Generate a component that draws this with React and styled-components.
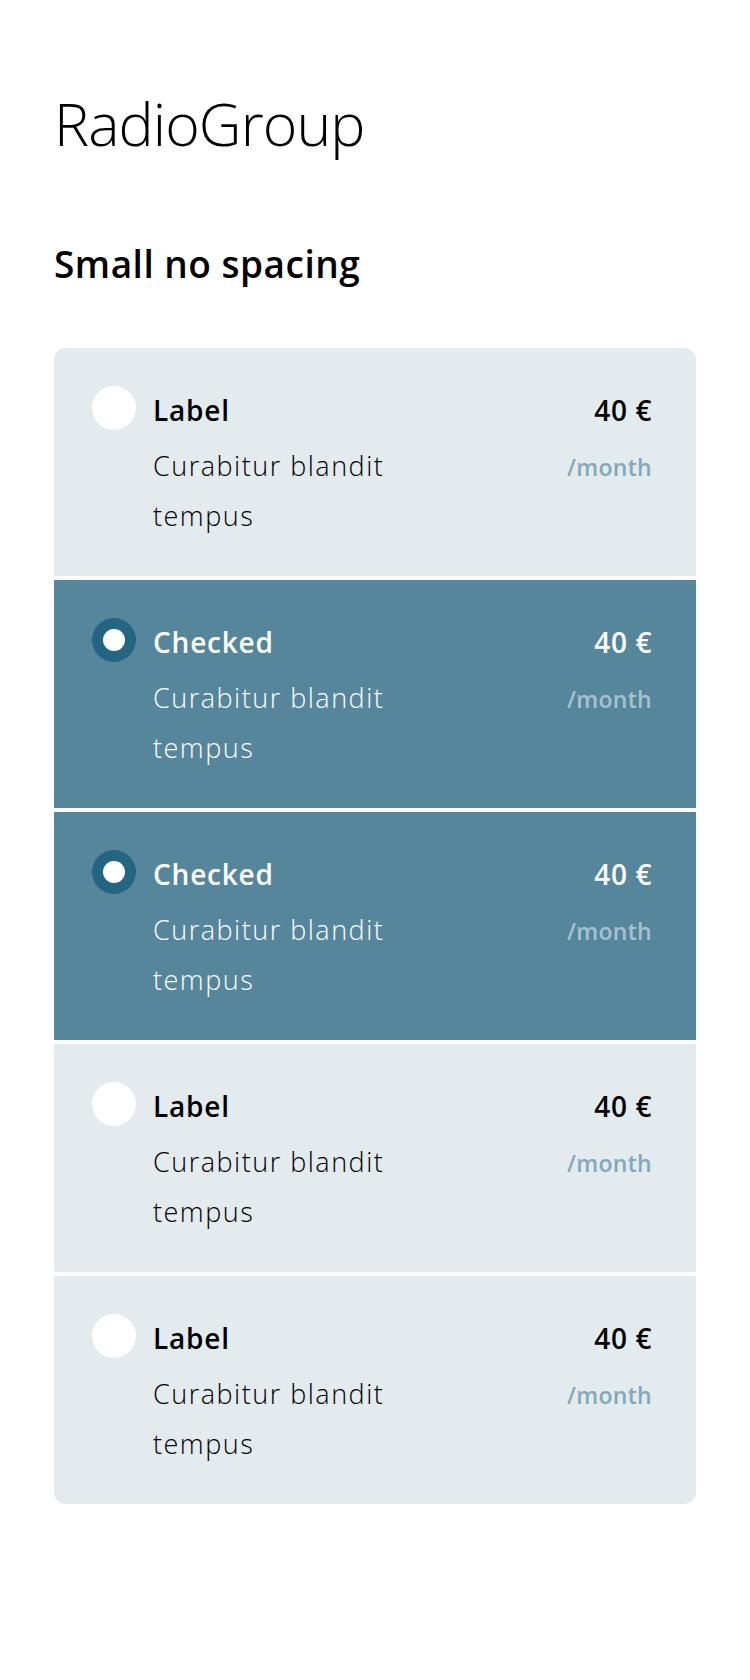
import React from "react";
import styled, { createGlobalStyle } from "styled-components";

const GlobalStyle = createGlobalStyle`
  body {
    margin: 0;
    background: #ffffff;
    font-family: "Open Sans", "Noto Sans", sans-serif;
    color: #000000;
  }
`;

const options = [
  { label: "Label", checked: false },
  { label: "Checked", checked: true },
  { label: "Checked", checked: true },
  { label: "Label", checked: false },
  { label: "Label", checked: false },
];

const Page = styled.main`
  padding: 83px 54px 100px;
`;

const Title = styled.h1`
  margin: 0;
  font-size: 59px;
  font-weight: 300;
  letter-spacing: -0.9px;
  line-height: 80px;
`;

const Subtitle = styled.h2`
  margin: 76px 0 0;
  font-size: 37px;
  font-weight: 600;
  letter-spacing: 0.5px;
  line-height: 50px;
`;

const Group = styled.div`
  margin-top: 59px;
  display: flex;
  flex-direction: column;
  gap: 4px;
  border-radius: 12px;
  overflow: hidden;
`;

const Item = styled.label`
  display: flex;
  gap: 17px;
  padding: 38px 44px 35px 38px;
  background: ${(p) => (p.$checked ? "#56869c" : "#e4ebef")};
  color: ${(p) => (p.$checked ? "#ffffff" : "#000000")};
  cursor: pointer;
`;

const Radio = styled.span`
  flex: 0 0 44px;
  width: 44px;
  height: 44px;
  border-radius: 50%;
  background: ${(p) => (p.$checked ? "#246582" : "#ffffff")};
  display: flex;
  align-items: center;
  justify-content: center;

  &::after {
    content: "";
    display: ${(p) => (p.$checked ? "block" : "none")};
    width: 22px;
    height: 22px;
    border-radius: 50%;
    background: #ffffff;
  }
`;

const Body = styled.div`
  flex: 1;
  display: flex;
  flex-direction: column;
  gap: 9px;
`;

const Row = styled.div`
  display: flex;
  justify-content: space-between;
  align-items: baseline;
`;

const TopRow = styled(Row)`
  margin-top: 2px;
`;

const Label = styled.span`
  font-size: 28px;
  font-weight: 600;
  letter-spacing: 0.8px;
  line-height: 44px;
`;

const Price = styled.span`
  font-size: 28px;
  font-weight: 600;
  letter-spacing: 0.6px;
  line-height: 44px;
`;

const Desc = styled.p`
  margin: 0;
  max-width: 270px;
  font-size: 27px;
  font-weight: 300;
  letter-spacing: 1.5px;
  line-height: 50px;
`;

const Per = styled.span`
  font-size: 23px;
  font-weight: 600;
  letter-spacing: 0.3px;
  color: ${(p) => (p.$checked ? "#a6c2d0" : "#84a8bb")};
`;

const App = () => {
  return (
    <>
      <GlobalStyle />
      <Page>
        <Title>RadioGroup</Title>
        <Subtitle>Small no spacing</Subtitle>
        <Group role="radiogroup">
          {options.map((o, i) => (
            <Item key={i} $checked={o.checked}>
              <Radio $checked={o.checked} />
              <Body>
                <TopRow>
                  <Label>{o.label}</Label>
                  <Price>40 €</Price>
                </TopRow>
                <Row>
                  <Desc>Curabitur blandit tempus</Desc>
                  <Per $checked={o.checked}>/month</Per>
                </Row>
              </Body>
            </Item>
          ))}
        </Group>
      </Page>
    </>
  );
};

export default App;
